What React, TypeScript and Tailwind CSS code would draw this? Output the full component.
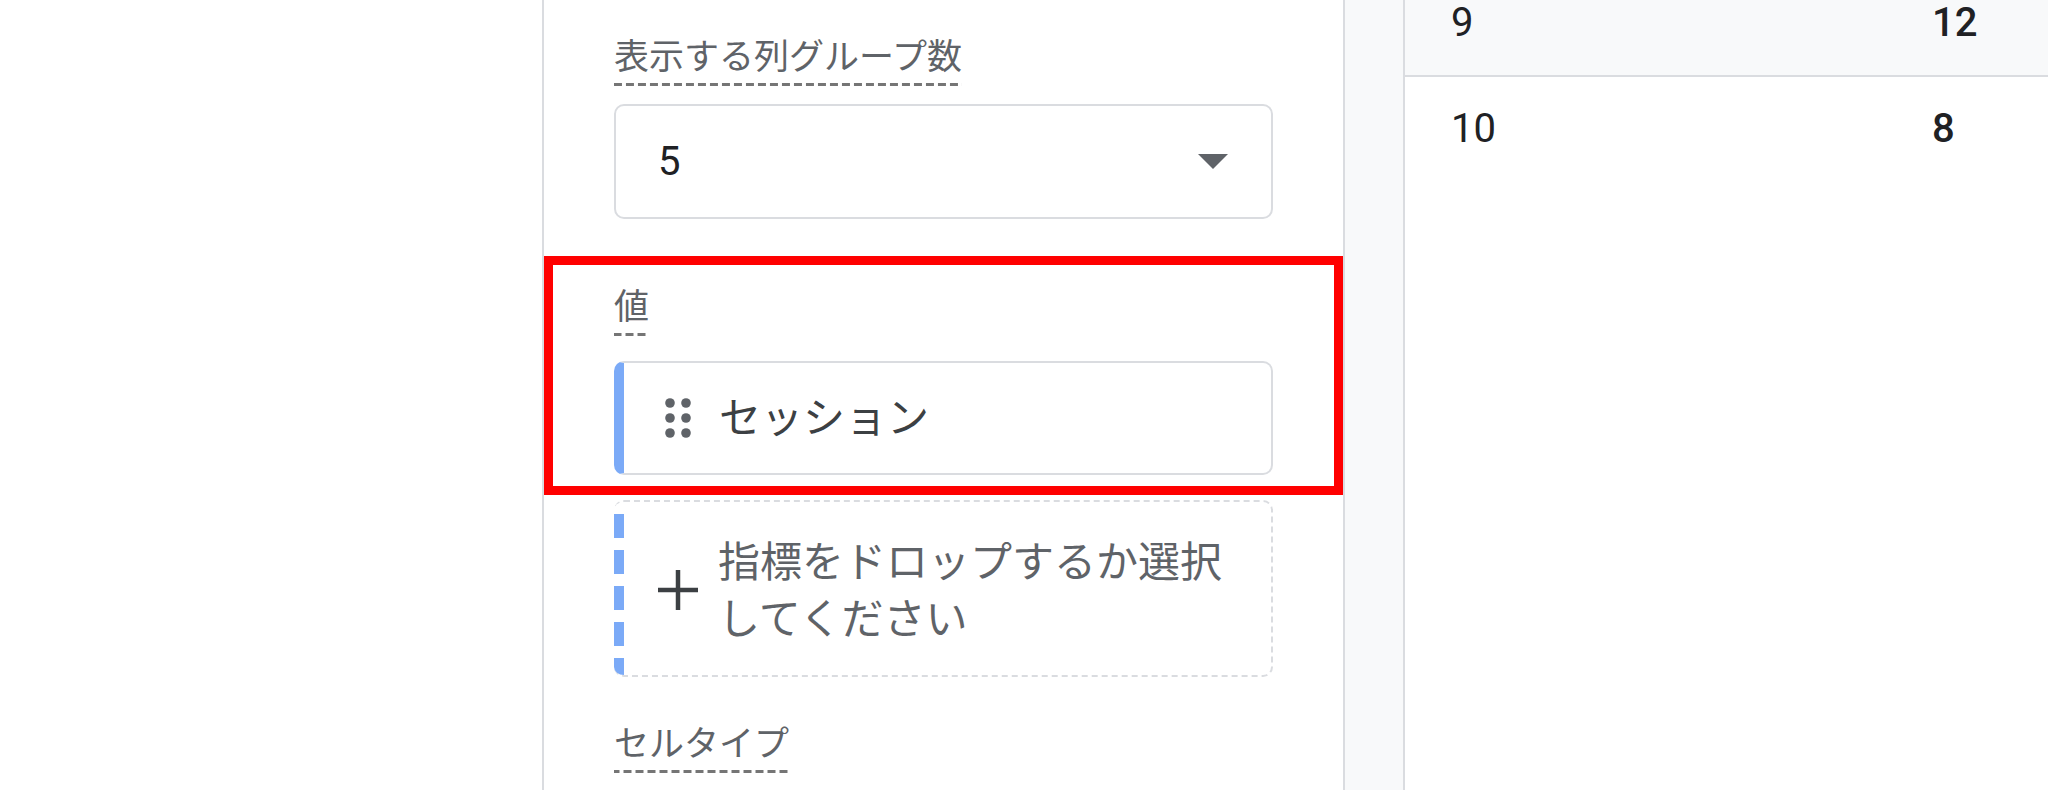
const Label = ({ text }: { text: string }) => (
  <div className="self-start inline-block pb-[8px] text-[35px] leading-[40px] text-[#5f6368] bg-[linear-gradient(to_right,#757575_8px,transparent_8px)] bg-[length:12px_3px] bg-repeat-x bg-bottom">
    {text}
  </div>
);

const DragHandle = () => (
  <svg width="28" height="40" viewBox="0 0 28 40" fill="#5f6368">
    <circle cx="5" cy="5" r="4.8" />
    <circle cx="21" cy="5" r="4.8" />
    <circle cx="5" cy="20" r="4.8" />
    <circle cx="21" cy="20" r="4.8" />
    <circle cx="5" cy="35" r="4.8" />
    <circle cx="21" cy="35" r="4.8" />
  </svg>
);

const App = () => {
  const rows = [
    { a: "9", b: "12", shade: true },
    { a: "10", b: "8", shade: false },
  ];

  return (
    <div className="flex w-[2048px] h-[790px] overflow-hidden bg-white font-[Roboto,'Noto_Sans_CJK_JP',sans-serif]">
      <div className="w-[542px] shrink-0" />

      {/* settings panel */}
      <div className="w-[803px] shrink-0 flex flex-col border-x-2 border-[#dadce0]">
        <div className="flex flex-col px-[70px] pt-[38px]">
          <Label text="表示する列グループ数" />
          <div className="mt-[18px] h-[115px] flex items-center justify-between rounded-[10px] border-2 border-[#dadce0] pl-[42px] pr-[43px]">
            <span className="text-[40px] text-[#202124]">5</span>
            <svg width="30" height="15" viewBox="0 0 30 15">
              <polygon points="0,0 30,0 15,15" fill="#5f6368" />
            </svg>
          </div>
        </div>

        <div className="mt-[37px] flex flex-col border-[9px] border-[#ff0000] px-[61px] pt-[23px] pb-[11px]">
          <Label text="値" />
          <div className="mt-[25px] h-[114px] flex items-center rounded-[10px] border-2 border-[#dadce0] border-l-[10px] border-l-[#7baaf7] pl-[41px]">
            <DragHandle />
            <span className="ml-[26px] text-[42px] text-[#3c4043]">セッション</span>
          </div>
        </div>

        <div className="flex flex-col px-[70px]">
          <div className="mt-[5px] h-[177px] flex overflow-hidden rounded-[10px] border-2 border-l-0 border-dashed border-[#dadce0]">
            <div className="w-[10px] shrink-0 bg-[repeating-linear-gradient(to_bottom,transparent_0_12px,#7baaf7_12px_36px)]" />
            <div className="flex flex-1 items-center pl-[33px] pr-[36px]">
              <svg width="42" height="42" viewBox="0 0 42 42" className="shrink-0 mt-[2px]">
                <path d="M21 1v40M1 21h40" stroke="#3c4043" strokeWidth="4.5" />
              </svg>
              <div className="ml-[19px] flex-1 text-[42px] leading-[57px] text-[#5f6368] mt-[5px]">
                指標をドロップするか選択してください
              </div>
            </div>
          </div>
          <div className="mt-[48px] flex flex-col">
            <Label text="セルタイプ" />
          </div>
        </div>
      </div>

      {/* gap between panel and table */}
      <div className="w-[60px] shrink-0 bg-[#f8f9fa] border-r-2 border-[#dadce0]" />

      {/* table */}
      <div className="flex-1 flex flex-col">
        <div className="-mt-[29px]">
          {rows.map((row) => (
            <div
              key={row.a}
              className={`h-[106px] flex items-center text-[40px] leading-none text-[#202124] border-b-2 ${
                row.shade ? "bg-[#f8f9fa] border-[#dadce0]" : "bg-white border-transparent"
              }`}
            >
              <div className="w-[527px] pl-[46px]">{row.a}</div>
              <div className="font-medium">{row.b}</div>
            </div>
          ))}
        </div>
      </div>
    </div>
  );
};

export default App;
